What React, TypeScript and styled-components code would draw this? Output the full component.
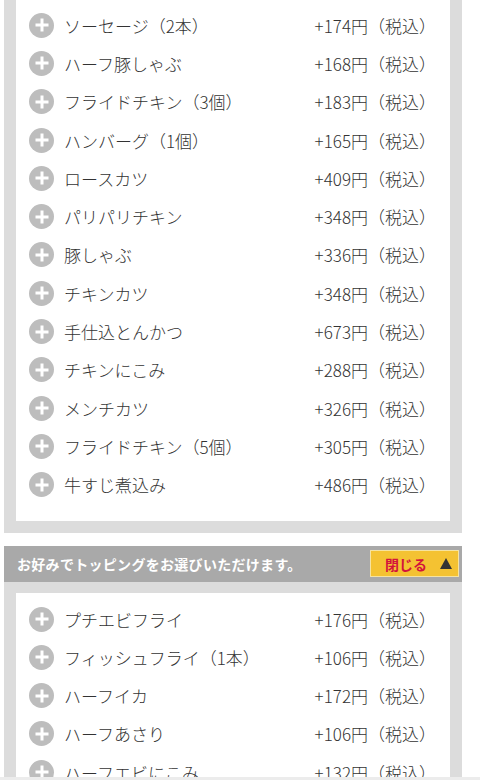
import React from "react";
import styled, { createGlobalStyle } from "styled-components";

const GlobalStyle = createGlobalStyle`
	html, body {
		margin: 0;
		padding: 0;
		background: #fff;
		font-family: "Noto Sans CJK JP", "Noto Sans", sans-serif;
		color: #333;
	}
`;

const Page = styled.div`
	width: 480px;
	height: 780px;
	overflow: hidden;
	position: relative;
`;

const Panel = styled.div<{ $offset?: number }>`
	width: 458px;
	margin: ${(p) => p.$offset ?? 0}px 0 0 4px;
	box-sizing: border-box;
	background: #dcdcdc;
	padding: 12px;
`;

const Section = styled.section`
	width: 458px;
	margin: 13px 0 0 4px;
`;

const SectionHeader = styled.div`
	height: 36px;
	background: #a9a9a9;
	display: flex;
	align-items: center;
	justify-content: space-between;
	padding: 0 3px 0 13px;
`;

const HeaderText = styled.span`
	color: #fff;
	font-size: 14px;
	font-weight: 700;
	letter-spacing: 0.3px;
`;

const CloseButton = styled.button`
	width: 89px;
	height: 27px;
	box-sizing: border-box;
	border: 1px solid #f6e3a0;
	background: #f4c232;
	display: flex;
	align-items: center;
	justify-content: flex-end;
	gap: 13px;
	padding: 0 6px 0 0;
	font-family: inherit;
	font-size: 14px;
	font-weight: 700;
	color: #d3133b;
	cursor: pointer;
`;

const Triangle = styled.span`
	width: 0;
	height: 0;
	border-left: 6px solid transparent;
	border-right: 6px solid transparent;
	border-bottom: 11px solid #333;
`;

const PanelBody = styled.div`
	background: #dcdcdc;
	padding: 11px 12px 12px;
`;

const Card = styled.ul`
	list-style: none;
	margin: 0;
	background: #fff;
	padding: 7px 0 17px;
`;

const Row = styled.li`
	height: 38.3px;
	display: flex;
	align-items: center;
	padding: 0 14px 0 13px;
	font-size: 17px;
	font-weight: 300;
`;

const PlusIcon = styled.span`
	width: 25px;
	height: 25px;
	flex: none;
	border-radius: 50%;
	background: #bdbdbd;
	position: relative;
	margin-right: 10px;

	&::before,
	&::after {
		content: "";
		position: absolute;
		background: #fff;
		left: 50%;
		top: 50%;
		transform: translate(-50%, -50%);
	}
	&::before {
		width: 13px;
		height: 3px;
	}
	&::after {
		width: 3px;
		height: 13px;
	}
`;

const Name = styled.span`
	flex: 1;
	white-space: nowrap;
`;

const Price = styled.span`
	white-space: nowrap;
`;

const BottomEdge = styled.div`
	position: fixed;
	left: 0;
	right: 0;
	bottom: 0;
	height: 3px;
	background: #ececec;
`;

type Item = { name: string; price: number };

const mainItems: Item[] = [
	{ name: "ソーセージ（2本）", price: 174 },
	{ name: "ハーフ豚しゃぶ", price: 168 },
	{ name: "フライドチキン（3個）", price: 183 },
	{ name: "ハンバーグ（1個）", price: 165 },
	{ name: "ロースカツ", price: 409 },
	{ name: "パリパリチキン", price: 348 },
	{ name: "豚しゃぶ", price: 336 },
	{ name: "チキンカツ", price: 348 },
	{ name: "手仕込とんかつ", price: 673 },
	{ name: "チキンにこみ", price: 288 },
	{ name: "メンチカツ", price: 326 },
	{ name: "フライドチキン（5個）", price: 305 },
	{ name: "牛すじ煮込み", price: 486 },
];

const toppingItems: Item[] = [
	{ name: "プチエビフライ", price: 176 },
	{ name: "フィッシュフライ（1本）", price: 106 },
	{ name: "ハーフイカ", price: 172 },
	{ name: "ハーフあさり", price: 106 },
	{ name: "ハーフエビにこみ", price: 132 },
];

const ItemList: React.FC<{ items: Item[] }> = ({ items }) => (
	<Card>
		{items.map((item) => (
			<Row key={item.name}>
				<PlusIcon />
				<Name>{item.name}</Name>
				<Price>+{item.price}円（税込）</Price>
			</Row>
		))}
	</Card>
);

const App: React.FC = () => {
	return (
		<React.Fragment>
			<GlobalStyle />
			<Page>
				<Panel $offset={-13}>
					<ItemList items={mainItems} />
				</Panel>

				<Section>
					<SectionHeader>
						<HeaderText>お好みでトッピングをお選びいただけます。</HeaderText>
						<CloseButton>
							閉じる
							<Triangle />
						</CloseButton>
					</SectionHeader>
					<PanelBody>
						<ItemList items={toppingItems} />
					</PanelBody>
				</Section>
				<BottomEdge />
			</Page>
		</React.Fragment>
	);
};

export default App;
